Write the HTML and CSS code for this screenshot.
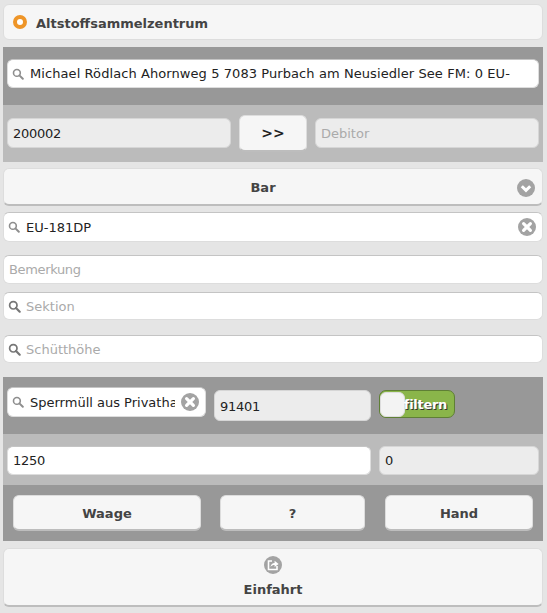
FILE: index.html
```html
<!DOCTYPE html>
<html lang="de">
<head>
    <meta charset="UTF-8">
    <title>Altstoffsammelzentrum</title>
    <link rel="stylesheet" href="styles.css">
</head>
<body>
    <svg class="sprites" width="0" height="0">
        <symbol id="search" viewBox="0 0 12 12">
            <circle cx="4.9" cy="4.9" r="3.4" fill="none" stroke="currentColor" stroke-width="1.6"/>
            <path d="M7.4 7.4 L10.8 10.8" stroke="currentColor" stroke-width="2" stroke-linecap="round"/>
        </symbol>
        <symbol id="clear" viewBox="0 0 18 18">
            <circle cx="9" cy="9" r="9" fill="#a3a3a3"/>
            <path d="M5.6 5.6 L12.4 12.4 M12.4 5.6 L5.6 12.4" stroke="#fff" stroke-width="3.2" stroke-linecap="round"/>
        </symbol>
    </svg>

    <div class="title-bar">
        <span class="radio"></span>
        <span class="title">Altstoffsammelzentrum</span>
    </div>

    <div class="band dark band-customer">
        <label class="field search">
            <svg class="lens"><use href="#search"/></svg>
            <input type="text" value="Michael Rödlach Ahornweg 5 7083 Purbach am Neusiedler See FM: 0 EU-181DP">
        </label>
    </div>

    <div class="band light band-debitor">
        <input class="field plain off num" type="text" value="200002" readonly>
        <button class="btn next">&gt;&gt;</button>
        <input class="field plain off" type="text" placeholder="Debitor" readonly>
    </div>

    <button class="btn select-bar">
        Bar
        <svg class="chevron" viewBox="0 0 18 18">
            <circle cx="9" cy="9" r="9" fill="#a3a3a3"/>
            <path d="M4.8 7.2 L9 11.4 L13.2 7.2" fill="none" stroke="#fff" stroke-width="3"/>
        </svg>
    </button>

    <div class="stack">
        <label class="field search row-plate">
            <svg class="lens"><use href="#search"/></svg>
            <input type="text" value="EU-181DP">
            <svg class="clear"><use href="#clear"/></svg>
        </label>
        <input class="field plain row-note" type="text" placeholder="Bemerkung">
        <label class="field search row-section">
            <svg class="lens big"><use href="#search"/></svg>
            <input type="text" placeholder="Sektion">
        </label>
        <label class="field search row-height">
            <svg class="lens big"><use href="#search"/></svg>
            <input type="text" placeholder="Schütthöhe">
        </label>
    </div>

    <div class="band dark band-waste">
        <label class="field search waste">
            <svg class="lens"><use href="#search"/></svg>
            <input type="text" value="Sperrmüll aus Privathaushalten">
            <svg class="clear"><use href="#clear"/></svg>
        </label>
        <input class="field plain off code num" type="text" value="91401" readonly>
        <div class="toggle">
            <span class="knob"></span>
            <span class="toggle-label">filtern</span>
        </div>
    </div>

    <div class="band light band-weight">
        <input class="field plain num" type="text" value="1250">
        <input class="field plain off num" type="text" value="0" readonly>
    </div>

    <div class="band dark band-actions">
        <button class="btn">Waage</button>
        <button class="btn">?</button>
        <button class="btn">Hand</button>
    </div>

    <button class="btn entry">
        <svg class="entry-icon" viewBox="0 0 18 18">
            <circle cx="9" cy="9" r="9" fill="#a3a3a3"/>
            <path d="M8 5 H4.5 V13.5 H13 V10" fill="none" stroke="#fff" stroke-width="1.6"/>
            <path d="M6.5 11 C6.8 8.2 8.6 7 10.6 7 V4.8 L14.6 7.9 L10.6 11 V9 C9 9 7.6 9.5 6.5 11 Z" fill="#fff"/>
        </svg>
        <span>Einfahrt</span>
    </button>
</body>
</html>
```

FILE: styles.css
```css
* {
    box-sizing: border-box;
}
body {
    margin: 0;
    padding: 4px 4px 0 3px;
    height: 613px;
    overflow: hidden;
    background: #e5e5e5;
    font-family: "DejaVu Sans", sans-serif;
    font-size: 13px;
    color: #222;
}
.sprites {
    position: absolute;
}
input {
    font: inherit;
    color: #222;
    border: 0;
    outline: 0;
    background: transparent;
    min-width: 0;
    padding: 0;
}
input::placeholder {
    color: #aaa;
    opacity: 1;
}

.title-bar {
    display: flex;
    align-items: center;
    height: 36px;
    padding-left: 9px;
    background: #f6f6f6;
    border: 1px solid #ddd;
    border-radius: 6px;
    margin-bottom: 7px;
}
.radio {
    width: 14px;
    height: 14px;
    border: 4px solid #ee9528;
    border-radius: 50%;
    background: #fff;
    margin-right: 9px;
}
.title {
    font-weight: bold;
    color: #444;
    padding-top: 2px;
}

.band {
    padding: 0 4px;
}
.dark {
    background: #989898;
}
.light {
    background: #bbb;
}

.field {
    display: flex;
    align-items: center;
    height: 29px;
    background: #fff;
    border-radius: 6px;
    border: 1px solid #ddd;
    border-top-color: #c4c4c4;
}
.plain {
    padding: 0 5px;
    width: 100%;
}
.off {
    background: #ececec;
    border-color: #d6d6d6;
}
.num {
    letter-spacing: -0.25px;
}
.search input {
    flex: 1;
    height: 100%;
}
.lens {
    flex: none;
    width: 12px;
    height: 12px;
    margin: 0 6px 0 4px;
    color: #8e8e8e;
}
.lens.big {
    width: 13px;
    height: 13px;
    margin-right: 5px;
    color: #777;
}
.clear {
    flex: none;
    width: 18px;
    height: 18px;
    margin: 0 6px 0 5px;
}
.waste .clear {
    margin: 0 6px 0 6px;
}

.btn {
    font: inherit;
    font-weight: bold;
    color: #444;
    background: #f6f6f6;
    border: 1px solid #ddd;
    border-bottom: 2px solid #bdbdbd;
    border-radius: 6px;
    padding: 2px 0 0;
}

.band-customer {
    height: 58px;
    padding-top: 12px;
}
.band-customer input {
    letter-spacing: 0.08px;
    padding-right: 28px;
}
.band-debitor {
    display: grid;
    grid-template-columns: 224px 68px 224px;
    column-gap: 8px;
    align-items: start;
    height: 57px;
    padding-top: 13px;
}
.band-debitor .field {
    height: 30px;
}
.next {
    height: 37px;
    margin-top: -3px;
    padding: 0;
    font-size: 14px;
    color: #222;
}

.select-bar {
    position: relative;
    display: block;
    width: 540px;
    height: 38px;
    margin: 6px 0;
    padding-right: 20px;
}
.chevron {
    position: absolute;
    right: 7px;
    top: 10px;
    width: 18px;
    height: 18px;
}

.stack {
    display: flex;
    flex-direction: column;
    width: 540px;
    margin-bottom: 14px;
}
.row-plate {
    height: 30px;
    margin-bottom: 13px;
}
.row-note {
    height: 29px;
    margin-bottom: 8px;
}
.row-note::placeholder {
    letter-spacing: -0.35px;
}
.row-section {
    height: 28px;
    margin-bottom: 15px;
}
.row-height {
    height: 28px;
}

.band-waste {
    display: grid;
    grid-template-columns: 199px 157px 76px;
    column-gap: 8px;
    height: 57px;
    padding-top: 10px;
}
.waste {
    height: 30px;
}
.code {
    height: 31px;
    margin-top: 3px;
    padding-top: 2px;
}
.toggle {
    position: relative;
    height: 28px;
    margin-top: 3px;
    background: #8ab54a;
    border: 1px solid #5f7f35;
    border-radius: 7px;
    display: flex;
    align-items: center;
    justify-content: flex-end;
    padding-right: 7px;
}
.knob {
    position: absolute;
    left: 0;
    top: 1px;
    width: 25px;
    height: 25px;
    background: #f3f3f3;
    border: 1px solid #ddd;
    border-radius: 6px;
}
.toggle-label {
    position: relative;
    font-weight: bold;
    letter-spacing: -0.3px;
    color: #fff;
    text-shadow: 1px 1px 0 #333;
}

.band-weight {
    display: grid;
    grid-template-columns: 364px 160px;
    column-gap: 8px;
    align-items: start;
    height: 51px;
    padding-top: 12px;
}
.band-actions {
    display: grid;
    grid-template-columns: 188px 145px 149px;
    column-gap: 19px;
    align-items: center;
    height: 56px;
    padding: 0 10px;
}
.band-actions .btn {
    height: 36px;
}
.band-actions .btn:last-child {
    margin-left: 1px;
}

.entry {
    display: flex;
    flex-direction: column;
    align-items: center;
    width: 540px;
    height: 59px;
    margin-top: 7px;
    padding-top: 7px;
    gap: 8px;
}
.entry-icon {
    width: 18px;
    height: 18px;
}
```
